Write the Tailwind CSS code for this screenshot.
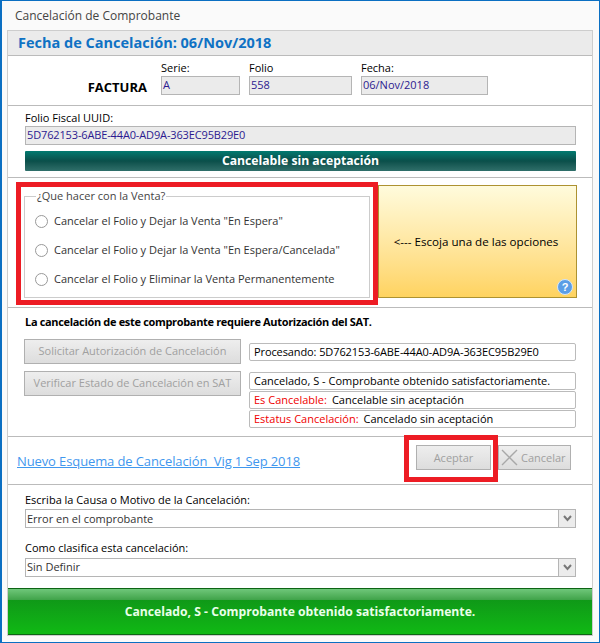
<!DOCTYPE html>
<html lang="es">
<head>
  <meta charset="UTF-8" />
  <title>Cancelación de Comprobante</title>
  <script src="https://cdn.jsdelivr.net/npm/@tailwindcss/browser@4"></script>
</head>
<body class="m-0 bg-white">
  <div class="relative w-[600px] h-[643px] overflow-hidden bg-[#fafafa] border border-l-2 border-[#0b6fc2] font-['Open_Sans',sans-serif] text-[11px] leading-[14px] text-black">
    <!-- Title -->
    <div class="h-[29px] pl-[13px] pt-[8px] text-[12px] text-[#444]">Cancelación de Comprobante</div>

    <!-- Panel -->
    <div class="ml-[5px] w-[586px] h-[606px] bg-white border border-[#cdcdcd] flex flex-col">
      <div class="h-[25px] shrink-0 bg-[#ebebeb] border-b border-[#bbb] pl-[10px] pt-[3px] text-[14.5px] leading-[18px] font-bold text-[#0f72c4]">Fecha de Cancelación: 06/Nov/2018</div>

      <!-- Datos -->
      <div class="h-[50px] shrink-0 border-b border-[#bbb] flex pt-[5px]">
        <div class="w-[139px] pt-[18px] text-right text-[13px] leading-[16px] font-bold">FACTURA</div>
        <div class="ml-[14px] w-[79px]">
          <div class="h-[15px]">Serie:</div>
          <div class="h-[19px] bg-[#ebebeb] border border-[#b5b5b5] pl-[1px] leading-[16px] text-[#2b1a90]">A</div>
        </div>
        <div class="ml-[9px] w-[103px]">
          <div class="h-[15px]">Folio</div>
          <div class="h-[19px] bg-[#ebebeb] border border-[#b5b5b5] pl-[1px] leading-[16px] text-[#2b1a90]">558</div>
        </div>
        <div class="ml-[9px] w-[127px]">
          <div class="h-[15px]">Fecha:</div>
          <div class="h-[19px] bg-[#ebebeb] border border-[#b5b5b5] pl-[1px] leading-[16px] text-[#2b1a90]">06/Nov/2018</div>
        </div>
      </div>

      <!-- UUID -->
      <div class="h-[72px] shrink-0 border-b border-[#bbb] pl-[17px] pr-[16px] pt-[5px]">
        <div class="h-[15px]">Folio Fiscal UUID:</div>
        <div class="h-[19px] bg-[#ebebeb] border border-[#b5b5b5] pl-[1px] leading-[16px] tracking-[-0.14px] text-[#2b1a90]">5D762153-6ABE-44A0-AD9A-363EC95B29E0</div>
        <div class="mt-[6px] h-[20px] rounded-[1px] bg-gradient-to-b from-[#007a70] via-[#0a4f4a] to-[#2f6f6a] text-center text-white font-bold text-[12.2px] leading-[19px]">Cancelable sin aceptación</div>
      </div>

      <!-- Opciones -->
      <div class="h-[130px] shrink-0 border-b border-[#bbb] flex pl-[16px] pt-[11px]">
        <fieldset class="w-[346px] h-[109px] border border-[#ccc] px-[10px]">
          <legend class="ml-[1px] px-[1px] text-[#444] leading-[14px]">¿Que hacer con la Venta?</legend>
          <div class="flex flex-col gap-[15px] mt-[11px] text-[#333]">
            <label class="flex items-center gap-[6px] h-[14px]"><span class="w-[13px] h-[13px] rounded-full border border-[#999] bg-white"></span>Cancelar el Folio y Dejar la Venta "En Espera"</label>
            <label class="flex items-center gap-[6px] h-[14px]"><span class="w-[13px] h-[13px] rounded-full border border-[#999] bg-white"></span>Cancelar el Folio y Dejar la Venta "En Espera/Cancelada"</label>
            <label class="flex items-center gap-[6px] h-[14px]"><span class="w-[13px] h-[13px] rounded-full border border-[#999] bg-white"></span>Cancelar el Folio y Eliminar la Venta Permanentemente</label>
          </div>
        </fieldset>
        <div class="relative ml-[8px] -mt-[4px] w-[199px] h-[113px] border border-[#ad9231] bg-gradient-to-b from-[#fffbdc] to-[#ffd35f] flex items-center justify-center pr-[3px]">
          <span class="text-[11.6px]">&lt;--- Escoja una de las opciones</span>
          <svg class="absolute right-[3px] bottom-[2px]" width="16" height="16" viewBox="0 0 16 16">
            <circle cx="8" cy="8" r="7.5" fill="#5b9ee6" stroke="#d5e6f8" />
            <text x="8" y="12" text-anchor="middle" font-family="Liberation Sans" font-size="11" font-weight="bold" fill="#fff">?</text>
          </svg>
        </div>
      </div>

      <!-- Autorizacion -->
      <div class="h-[129px] shrink-0 border-b border-[#bbb] pl-[16px] pr-[16px] pt-[7px]">
        <div class="h-[14px] pl-[1px] font-bold tracking-[-0.33px]">La cancelación de este comprobante requiere Autorización del SAT.</div>
        <div class="flex mt-[10px]">
          <div class="w-[217px] shrink-0 flex flex-col gap-[7px]">
            <div class="h-[25px] border border-[#b0b0b0] bg-gradient-to-b from-[#eee] to-[#ddd] text-center leading-[22px] text-[#a0a0a0]">Solicitar Autorización de Cancelación</div>
            <div class="h-[25px] border border-[#b0b0b0] bg-gradient-to-b from-[#eee] to-[#ddd] text-center leading-[22px] text-[#a0a0a0]">Verificar Estado de Cancelación en SAT</div>
          </div>
          <div class="ml-[8px] flex-1 pt-[4px]">
            <div class="h-[18px] border border-[#bbb] rounded-[2px] pl-[4px] leading-[15px] tracking-[-0.1px]">Procesando: 5D762153-6ABE-44A0-AD9A-363EC95B29E0</div>
            <div class="mt-[11px] h-[18px] border border-[#bbb] rounded-[2px] pl-[4px] leading-[15px]">Cancelado, S - Comprobante obtenido satisfactoriamente.</div>
            <div class="mt-[1px] h-[18px] border border-[#bbb] rounded-[2px] pl-[4px] leading-[15px]"><span class="text-[#f00000] mr-[5px]">Es Cancelable:</span>Cancelable sin aceptación</div>
            <div class="mt-[1px] h-[18px] border border-[#bbb] rounded-[2px] pl-[4px] leading-[15px]"><span class="text-[#f00000] mr-[5px]">Estatus Cancelación:</span>Cancelado sin aceptación</div>
          </div>
        </div>
      </div>

      <!-- Acciones -->
      <div class="h-[48px] shrink-0 border-b border-[#bbb] flex pl-[9px]">
        <a class="mt-[15px] h-[18px] w-[284px] text-[13px] leading-[18px] tracking-[-0.11px] text-[#3f97ee] underline whitespace-pre">Nuevo Esquema de Cancelación  Vig 1 Sep 2018</a>
        <div class="ml-[115px] mt-[8px] w-[75px] h-[25px] border border-[#b0b0b0] bg-gradient-to-b from-[#eee] to-[#ddd] text-center leading-[23px] text-[#a0a0a0]">Aceptar</div>
        <div class="ml-[7px] mt-[8px] w-[73px] h-[25px] border border-[#b0b0b0] bg-gradient-to-b from-[#eee] to-[#ddd] flex items-center text-[#a0a0a0]">
          <svg class="ml-[2px]" width="17" height="17" viewBox="0 0 17 17" fill="none" stroke="#a8a8a8" stroke-width="1.4"><path d="M1 1 L16 16 M16 1 L1 16" /></svg>
          <span class="ml-[3px]">Cancelar</span>
        </div>
      </div>

      <!-- Motivo -->
      <div class="flex-1 pl-[17px] pr-[16px] pt-[8px]">
        <div class="h-[14px]">Escriba la Causa o Motivo de la Cancelación:</div>
        <div class="mt-[2px] h-[19px] border border-[#b5b5b5] flex text-[#333]">
          <div class="flex-1 pl-[1px] leading-[18px]">Error en el comprobante</div>
          <div class="w-[17px] border-l border-[#b5b5b5] bg-[#ececec] flex items-center justify-center">
            <svg width="9" height="7" viewBox="0 0 9 7" fill="none" stroke="#777" stroke-width="2"><path d="M1 1 L4.5 5 L8 1" /></svg>
          </div>
        </div>
        <div class="mt-[13px] h-[15px]">Como clasifica esta cancelación:</div>
        <div class="mt-[2px] h-[19px] border border-[#b5b5b5] flex text-[#333]">
          <div class="flex-1 pl-[1px] leading-[16px]">Sin Definir</div>
          <div class="w-[17px] border-l border-[#b5b5b5] bg-[#ececec] flex items-center justify-center">
            <svg width="9" height="7" viewBox="0 0 9 7" fill="none" stroke="#777" stroke-width="2"><path d="M1 1 L4.5 5 L8 1" /></svg>
          </div>
        </div>
      </div>

      <!-- Estado -->
      <div class="relative h-[47px] shrink-0 border-y border-[#0d6414] bg-gradient-to-b from-[#0f8f18] to-[#10b914] text-center text-[#e9ffe9] font-bold text-[12.2px] leading-[45px]">
        <div class="absolute inset-x-0 top-0 h-[11px] bg-gradient-to-b from-[#6fc77a] to-[#3fa349]"></div>
        <span class="relative">Cancelado, S - Comprobante obtenido satisfactoriamente.</span>
      </div>
    </div>

    <!-- Recuadros rojos -->
    <div class="absolute left-[14px] top-[181px] w-[362px] h-[123px] border-[5px] border-[#ed1c24]"></div>
    <div class="absolute left-[402px] top-[434px] w-[94px] h-[47px] border-[5px] border-[#ed1c24]"></div>
  </div>
</body>
</html>
